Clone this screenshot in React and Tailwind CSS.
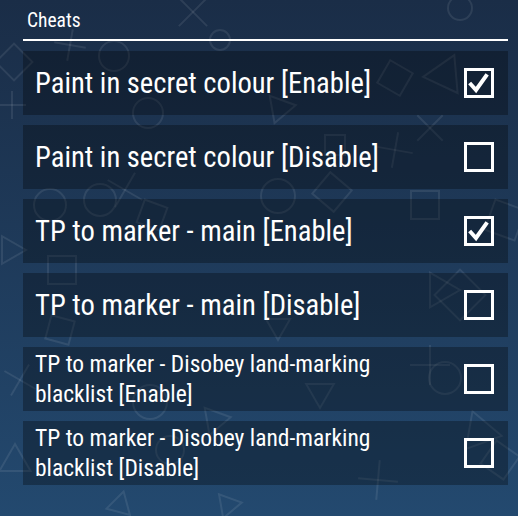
const rows = [
  { label: 'Paint in secret colour [Enable]', checked: true, small: false },
  { label: 'Paint in secret colour [Disable]', checked: false, small: false },
  { label: 'TP to marker - main [Enable]', checked: true, small: false },
  { label: 'TP to marker - main [Disable]', checked: false, small: false },
  { label: 'TP to marker - Disobey land-marking blacklist [Enable]', checked: false, small: true },
  { label: 'TP to marker - Disobey land-marking blacklist [Disable]', checked: false, small: true },
];

function Cross({ x, y, s, r }) {
  return (
    <g transform={`translate(${x} ${y}) rotate(${r})`}>
      <line x1={-s} y1={0} x2={s} y2={0} />
      <line x1={0} y1={-s} x2={0} y2={s} />
    </g>
  );
}
function Square({ x, y, s, r }) {
  return <rect x={-s} y={-s} width={s * 2} height={s * 2} transform={`translate(${x} ${y}) rotate(${r})`} />;
}
function Tri({ x, y, s, r }) {
  const h = s * 0.866;
  return <polygon points={`0,${-s} ${h},${s / 2} ${-h},${s / 2}`} transform={`translate(${x} ${y}) rotate(${r})`} />;
}
function Circ({ x, y, s }) {
  return <circle cx={x} cy={y} r={s} />;
}

function Background() {
  return (
    <svg className="absolute inset-0" width="518" height="516" viewBox="0 0 518 516" fill="none" stroke="rgba(255,255,255,0.085)" strokeWidth="2">
      <Cross x={193} y={12} s={20} r={45} />
      <Circ x={460} y={8} s={12} />
      <Square x={14} y={62} s={13} r={45} />
      <Cross x={12} y={105} s={14} r={0} />
      <Cross x={70} y={45} s={16} r={10} />
      <Circ x={114} y={56} s={15} />
      <Circ x={148} y={113} s={15} />
      <Square x={395} y={78} s={13} r={30} />
      <Tri x={280} y={108} s={16} r={200} />
      <Tri x={445} y={75} s={22} r={25} />
      <Cross x={430} y={128} s={18} r={45} />
      <Cross x={395} y={150} s={18} r={10} />
      <Square x={335} y={145} s={10} r={0} />
      <Circ x={50} y={205} s={16} />
      <Circ x={100} y={200} s={16} />
      <Cross x={125} y={190} s={20} r={30} />
      <Square x={152} y={215} s={12} r={20} />
      <Circ x={278} y={196} s={17} />
      <Square x={332} y={192} s={14} r={40} />
      <Square x={425} y={205} s={14} r={0} />
      <Square x={505} y={220} s={16} r={20} />
      <Tri x={10} y={250} s={16} r={90} />
      <Square x={62} y={270} s={14} r={0} />
      <Tri x={278} y={326} s={14} r={180} />
      <Tri x={440} y={290} s={20} r={-30} />
      <Square x={460} y={295} s={18} r={45} />
      <Circ x={445} y={378} s={16} />
      <Cross x={430} y={365} s={20} r={0} />
      <Tri x={320} y={392} s={16} r={180} />
      <Tri x={215} y={420} s={16} r={200} />
      <Circ x={150} y={402} s={17} />
      <Circ x={170} y={450} s={14} />
      <Tri x={15} y={462} s={18} r={0} />
      <Tri x={228} y={505} s={14} r={200} />
      <Cross x={378} y={480} s={20} r={5} />
      <Tri x={480} y={432} s={22} r={-20} />
      <Square x={500} y={460} s={14} r={35} />
      <Tri x={120} y={505} s={14} r={15} />
      <Cross x={20} y={380} s={18} r={30} />
      <Circ x={220} y={40} s={10} />
      <Square x={60} y={330} s={12} r={15} />
    </svg>
  );
}

function Checkbox({ checked }) {
  return (
    <div className="flex h-[30px] w-[30px] shrink-0 items-center justify-center border-[3px] border-white">
      {checked && (
        <svg width="24" height="24" viewBox="0 0 24 24" fill="none" stroke="white" strokeWidth="4" strokeLinecap="square" strokeLinejoin="miter">
          <polyline points="4,13.5 9,19 19,5" />
        </svg>
      )}
    </div>
  );
}

export default function App() {
  return (
    <div className="relative h-[516px] w-[518px] overflow-hidden bg-gradient-to-b from-[#1a2d47] to-[#23496f] font-['Roboto_Condensed','Liberation_Sans',sans-serif] text-white">
      <Background />
      <div className="relative flex flex-col pt-[9px] pl-[23px] pr-[10px]">
        <div className="border-b-2 border-white pb-[6px] pl-[4px] text-[19.5px] leading-6">Cheats</div>
        <div className="mt-[10px] flex flex-col gap-[10px]">
          {rows.map((r) => (
            <div key={r.label} className="flex h-[64px] items-center justify-between bg-black/30 pl-[12px] pr-[14px]">
              {r.small ? (
                <div className="w-[380px] text-[23.5px] leading-[30px]">{r.label}</div>
              ) : (
                <div className="text-[28.6px] leading-[34px]">{r.label}</div>
              )}
              <Checkbox checked={r.checked} />
            </div>
          ))}
        </div>
      </div>
    </div>
  );
}
